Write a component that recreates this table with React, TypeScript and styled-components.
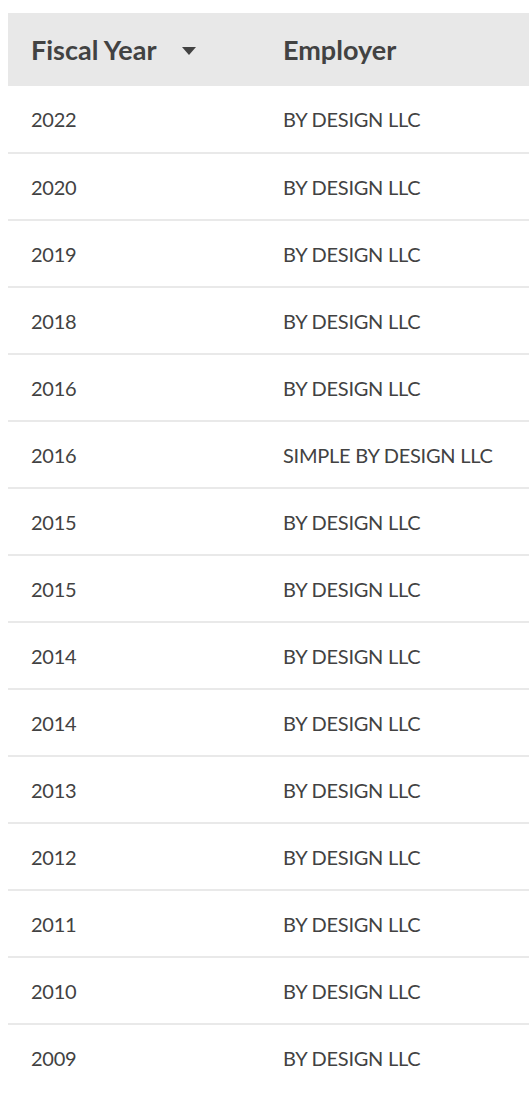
import React from "react";
import styled, { createGlobalStyle } from "styled-components";

interface IGrant {
  year: number;
  employer: string;
}

const grants: IGrant[] = [
  { year: 2022, employer: "BY DESIGN LLC" },
  { year: 2020, employer: "BY DESIGN LLC" },
  { year: 2019, employer: "BY DESIGN LLC" },
  { year: 2018, employer: "BY DESIGN LLC" },
  { year: 2016, employer: "BY DESIGN LLC" },
  { year: 2016, employer: "SIMPLE BY DESIGN LLC" },
  { year: 2015, employer: "BY DESIGN LLC" },
  { year: 2015, employer: "BY DESIGN LLC" },
  { year: 2014, employer: "BY DESIGN LLC" },
  { year: 2014, employer: "BY DESIGN LLC" },
  { year: 2013, employer: "BY DESIGN LLC" },
  { year: 2012, employer: "BY DESIGN LLC" },
  { year: 2011, employer: "BY DESIGN LLC" },
  { year: 2010, employer: "BY DESIGN LLC" },
  { year: 2009, employer: "BY DESIGN LLC" },
];

const App = (): JSX.Element => (
  <>
    <GlobalStyle />
    <Table>
      <thead>
        <HeadRow>
          <HeadCell>
            <SortLabel>
              Fiscal Year
              <Caret />
            </SortLabel>
          </HeadCell>
          <HeadCell>Employer</HeadCell>
        </HeadRow>
      </thead>
      <tbody>
        {grants.map((g, i) => (
          <Row key={i}>
            <YearCell>{g.year}</YearCell>
            <Cell>{g.employer}</Cell>
          </Row>
        ))}
      </tbody>
    </Table>
  </>
);

const GlobalStyle = createGlobalStyle`
  body {
    margin: 13px 0 0 8px;
    background: #ffffff;
    font-family: "Lato", "Liberation Sans", sans-serif;
    color: #424242;
  }
`;

const Table = styled.table`
  width: 521px;
  border-collapse: collapse;
  table-layout: fixed;
`;

const HeadRow = styled.tr`
  background-color: #e8e8e8;
  height: 73px;
`;

const HeadCell = styled.th`
  text-align: left;
  padding: 0 0 0 23px;
  font-size: 27px;
  font-weight: 700;
  color: #424242;
  vertical-align: middle;
  &:first-child {
    width: 229px;
  }
`;

const SortLabel = styled.span`
  display: inline-flex;
  align-items: center;
  gap: 25px;
`;

const Caret = styled.span`
  width: 0;
  height: 0;
  border-left: 7px solid transparent;
  border-right: 7px solid transparent;
  border-top: 8px solid #424242;
  margin-top: 2px;
`;

const Row = styled.tr`
  height: 67px;
  border-bottom: 2px solid #e9e9e9;
  &:last-child {
    border-bottom: none;
  }
`;

const Cell = styled.td`
  padding: 0 0 0 23px;
  font-size: 20px;
  letter-spacing: -0.25px;
  vertical-align: middle;
  white-space: nowrap;
`;

const YearCell = styled(Cell)`
  width: 229px;
`;

export default App;
